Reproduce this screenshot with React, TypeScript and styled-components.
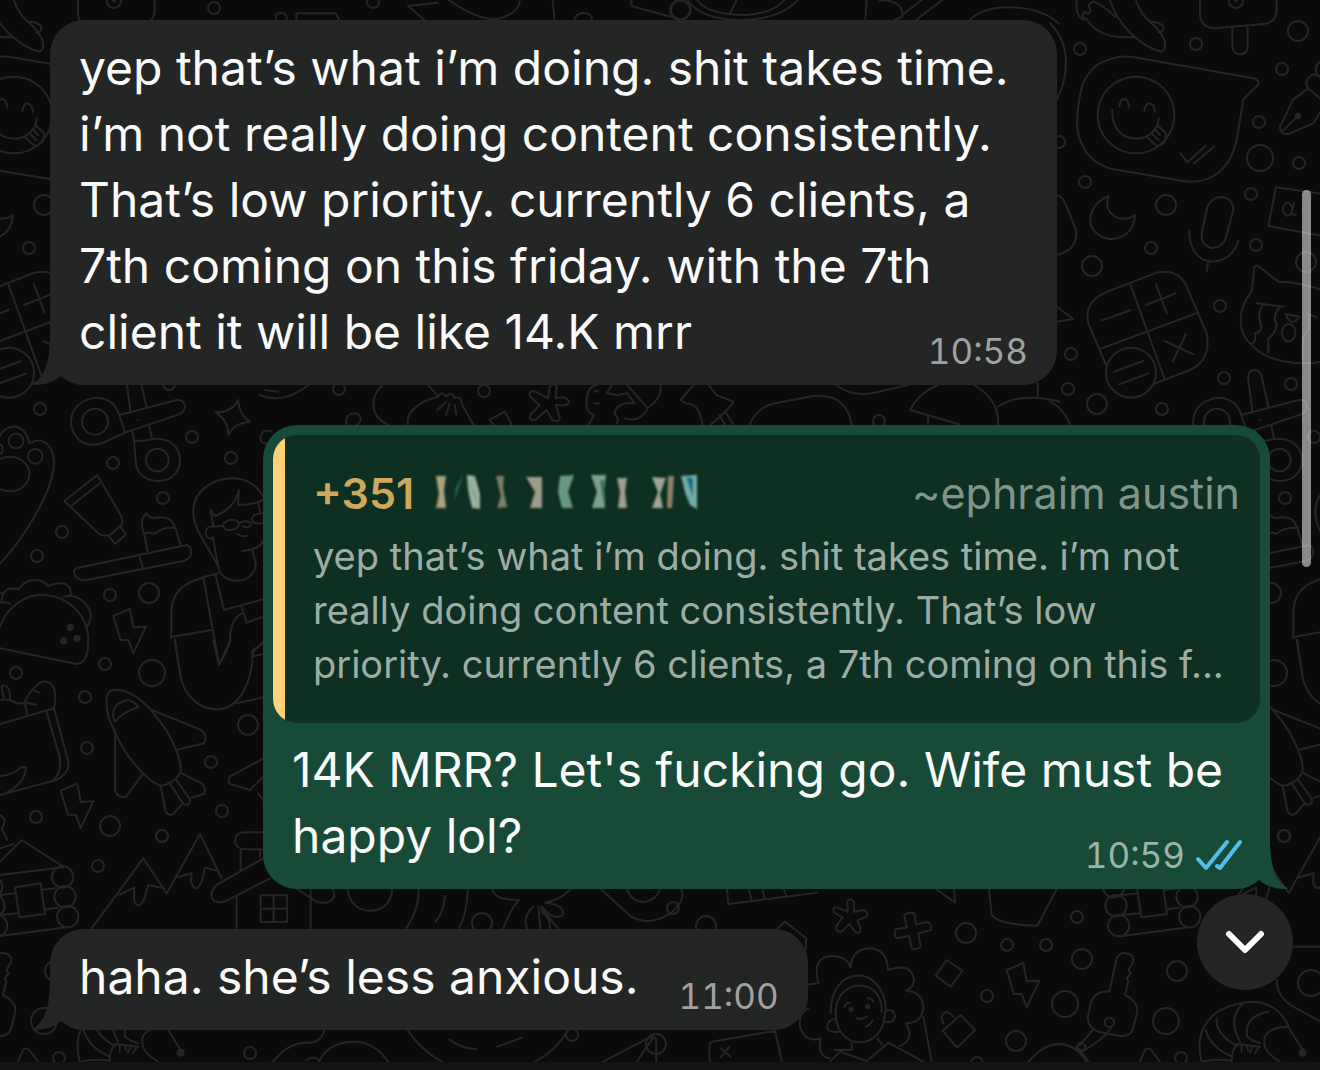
import React from "react";
import styled, { createGlobalStyle } from "styled-components";

const GlobalStyle = createGlobalStyle`
  *, *::before, *::after { box-sizing: border-box; }
  body {
    margin: 0;
    background: #0a0a0a;
    color: #fafafa;
    font-family: Inter, "Noto Sans", sans-serif;
  }
`;

const Screen = styled.div`
  position: relative;
  display: flex;
  flex-direction: column;
  min-height: 100vh;
  overflow: hidden;
  background: #0a0a0a;
`;

const WallpaperSvg = styled.svg`
  position: absolute;
  inset: 0;
  width: 100%;
  height: 100%;
  color: #252525;

  path, circle, ellipse, rect { vector-effect: non-scaling-stroke; }
`;

const Thread = styled.main`
  position: relative;
  flex: 1;
  display: flex;
  flex-direction: column;
  gap: 40px;
  padding: 20px 50px 32px;
`;

const Bubble = styled.article<{ $outgoing?: boolean }>`
  position: relative;
  align-self: ${(p) => (p.$outgoing ? "flex-end" : "flex-start")};
  max-width: 1007px;
  padding: ${(p) => (p.$outgoing ? "10px 10px 20px" : "15px 29px 20px")};
  border-radius: 34px;
  background: ${(p) => (p.$outgoing ? "#184b37" : "#242625")};
`;

const TailSvg = styled.svg<{ $outgoing?: boolean }>`
  position: absolute;
  bottom: 0;
  ${(p) => (p.$outgoing ? "right: -18px; transform: scaleX(-1);" : "left: -18px;")}
  color: ${(p) => (p.$outgoing ? "#184b37" : "#242625")};
`;

const Body = styled.p<{ $inset?: boolean }>`
  position: relative;
  margin: 0;
  padding: ${(p) => (p.$inset ? "14px 18px 0 19px" : "0")};
  font-size: 48px;
  line-height: 66px;
`;

const Meta = styled.span<{ $outgoing?: boolean }>`
  float: right;
  display: flex;
  align-items: center;
  gap: 10px;
  margin: 28px 0 -10px 40px;
  font-size: 35px;
  line-height: 48px;
  font-variant-numeric: tabular-nums;
  color: ${(p) => (p.$outgoing ? "#9bb3a9" : "#a0a1a0")};
`;

const Quote = styled.blockquote`
  margin: 0;
  padding: 30px 20px 32px 28px;
  border-radius: 24px;
  overflow: hidden;
  background: #0d3023;
  display: flow-root;
  position: relative;
  padding-left: 40px;

  &::before {
    content: "";
    position: absolute;
    inset: 0 auto 0 0;
    width: 12px;
    background: #ffd279;
  }
`;

const QuoteHeader = styled.header`
  display: flex;
  align-items: center;
  gap: 20px;
  font-size: 43px;
  line-height: 56px;
  padding-bottom: 8px;
`;

const Phone = styled.span`
  font-weight: 600;
  color: #cfa85c;
`;

const Author = styled.cite`
  margin-left: auto;
  font-style: normal;
  color: #7f948b;
`;

const QuoteText = styled.p`
  margin: 0;
  font-size: 38px;
  line-height: 54px;
  color: #9dada6;
`;

const ScrollThumb = styled.div`
  position: absolute;
  top: 190px;
  right: 9px;
  width: 9px;
  height: 377px;
  border-radius: 5px;
  background: rgba(255, 255, 255, 0.52);
`;

const JumpButton = styled.button`
  position: absolute;
  right: 27px;
  bottom: 80px;
  display: grid;
  place-items: center;
  width: 96px;
  height: 96px;
  padding: 0;
  border: 0;
  border-radius: 50%;
  background: #242625;
  color: #fff;
  cursor: pointer;
`;

const BottomBar = styled.footer`
  position: relative;
  height: 8px;
  background: #121413;
`;

const TILE = 1122;

const smallDots: [number, number][] = [
  [40, 409], [113, 463], [192, 437], [231, 458], [163, 498], [62, 532], [37, 556], [110, 595],
  [16, 673], [105, 664], [85, 697], [87, 748], [211, 762], [36, 817], [222, 811], [162, 836],
  [98, 866], [59, 1058], [250, 1053], [1080, 49], [1196, 44], [1282, 69], [1259, 122],
  [1299, 163], [1059, 142], [1085, 182], [1251, 194], [1151, 248], [1256, 245], [1220, 306],
  [1071, 354], [1068, 389], [1224, 378], [1291, 384], [1284, 836], [1077, 917], [1007, 945],
  [1046, 945], [987, 996], [977, 1063], [673, 908], [572, 1035], [214, 8], [373, 2],
  [339, 389], [484, 391], [879, 421],
];
const mediumDots: [number, number][] = [
  [149, 593], [248, 725], [110, 826], [1298, 31], [1166, 205], [1092, 266], [1306, 262],
  [1097, 404], [966, 933], [1082, 959], [1177, 971], [1016, 1041], [482, 923], [706, 926],
  [656, 1044], [680, 10],
];
const largeDots: [number, number][] = [
  [152, 673], [1260, 158], [1065, 1004], [1166, 1021], [1311, 983],
];

const Bolt = ({ at }: { at: string }) => (
  <path transform={at} d="M340 708 L390 687 L400 742 L438 740 L400 820 L385 780 L362 780Z" />
);

const Doodles = () => (
  <g id="doodles" fill="none" stroke="currentColor" strokeWidth={2} strokeLinecap="round" strokeLinejoin="round">
    {smallDots.map(([x, y]) => <circle key={`${x}-${y}`} cx={x} cy={y} r={6} />)}
    {mediumDots.map(([x, y]) => <circle key={`${x}-${y}`} cx={x} cy={y} r={10} />)}
    {largeDots.map(([x, y]) => <circle key={`${x}-${y}`} cx={x} cy={y} r={13} />)}

    {/* paw, tape rolls, star, toothpaste, brush, reader, taco */}
    <g transform="translate(0 380) scale(.3333)">
      <circle cx={48} cy={183} r={22} /><circle cx={106} cy={229} r={22} /><ellipse cx={30} cy={282} rx={58} ry={52} />
      <path d="M-14 190 Q8 190 8 208 Q8 225 -14 225 M0 168 C15 130 75 125 88 190 C130 165 170 200 160 270 C150 350 60 490 0 550" />
      <circle cx={285} cy={125} r={39} />
      <path d="M358 105 C345 60 300 45 265 58 C215 75 200 125 225 165 C245 197 280 200 310 188 L375 158Z" />
      <path d="M358 105 L530 60 Q553 57 555 80 Q553 98 535 104 L375 158 M398 155 L402 184 M448 137 L456 175 M413 119 l1 1" />
      <circle cx={472} cy={240} r={34} />
      <path d="M402 184 L440 181 C500 165 540 195 540 240 C540 280 510 303 475 303 C440 303 410 285 407 245Z" />
      <path d="M714 60 Q720 110 750 125 Q700 130 685 165 Q685 120 647 97 Q695 98 714 60Z" />
      <path d="M815 155 Q790 145 784 165 Q775 190 800 190" />
      <path d="M292 285 L193 363 L295 460 Q310 470 330 465 L365 435 Q370 425 362 405Z M213 378 L300 310 M328 470 L345 492 L378 463 L362 442" />
      <path d="M235 563 L560 495 Q575 500 573 520 Q570 538 550 543 L255 601 Q225 600 222 575 Q222 567 235 563Z M418 528 L428 562" />
      <path d="M443 515 L433 462 Q415 420 440 400 Q450 420 480 412 Q515 410 525 442 L541 493 M433 462 Q450 455 462 462 Q490 440 527 444" />
      <path d="M655 560 C620 490 580 450 580 395 C580 330 640 295 700 295 C750 295 780 330 790 350 M632 390 L645 408 Q700 390 717 330 L714 375 Q760 375 790 360 M775 370 L780 395" />
      <ellipse cx={693} cy={435} rx={24} ry={15} transform="rotate(-10 693 435)" />
      <ellipse cx={780} cy={415} rx={24} ry={15} transform="rotate(-10 780 415)" />
      <path d="M718 430 Q738 418 754 430 M728 438 Q740 448 752 436 M668 437 L640 440 C610 435 610 480 638 476 M632 390 L640 438 M638 470 L655 560 C665 620 760 615 768 555 L758 512 M725 513 Q785 510 795 470 M712 462 Q725 472 742 467" />
      <path d="M514 775 L514 700 C514 620 570 600 655 580 M610 592 L655 840 M646 582 L672 690 L790 658 M520 770 L635 750 M725 680 L740 728 L790 710 M525 780 L533 840 M725 700 Q690 720 690 780 Q680 820 665 840 M755 820 L790 785" />
      <path d="M0 740 C20 680 80 640 135 645 C210 650 265 710 265 780 M10 640 Q25 620 55 628 Q75 600 105 600 Q130 600 145 618 Q170 605 195 612 Q215 622 212 645 M190 650 C240 640 275 680 272 715 L262 740 M-6 640 L10 640 L4 665 M0 668 Q20 665 30 672" />
      <g fill="currentColor"><circle cx={211} cy={742} r={8} /><circle cx={191} cy={783} r={8} /><circle cx={231} cy={775} r={8} /></g>
      <Bolt at="" />
    </g>

    {/* grocery bag, shuttle, mountains, house, cabin */}
    <g transform="translate(0 640) scale(.3333)">
      <path d="M265 0 Q265 70 230 72 L0 25" />
      <path d="M0 252 L162 205 L205 365 Q207 395 185 410 Q170 422 150 425 L0 465 M140 217 L180 355 Q185 400 160 420 M0 408 Q40 405 62 382 L78 382 Q75 430 20 458" />
      <path d="M72 190 C90 150 120 120 140 125 C170 130 168 180 162 205 M72 190 Q80 200 80 225 M0 180 Q30 175 50 190 L70 190 M97 150 L118 158 M78 188 L108 194 M5 138 Q30 130 30 175 M5 140 L12 178" />
      <path d="M340 265 C315 220 315 165 330 152 C380 140 430 180 465 225 C520 290 550 370 540 400 Q520 435 480 437 C430 415 370 340 340 265Z M345 245 C330 215 345 185 385 180 Q405 185 415 202 Q370 215 345 245Z" />
      <path d="M345 270 L345 450 Q350 475 378 470 L430 400 M455 210 L600 268 Q625 285 612 310 L528 330 M482 438 L497 515 Q508 530 520 522 L548 490 M545 400 L605 430 Q620 445 612 462 L575 473 M508 428 L550 492 Q570 500 570 478 L528 418" />
      <Bolt at="translate(-158 -256)" />
      <path d="M275 865 L430 655 L500 760 L600 582 L665 715 M358 765 L403 742 L402 780 Q410 810 430 785 L445 735 L493 745 M533 712 L575 700 L573 725 Q585 765 605 725 L615 683 L655 693" />
      <path d="M790 577 L730 577 Q705 580 705 605 Q710 628 735 628 L790 628 M722 630 L722 690 M780 630 L780 650 M790 655 L650 735 Q625 760 640 780 Q660 795 690 777 L810 715 M710 768 L710 865" />
      <path d="M790 355 L690 410 Q682 425 690 432 L750 450 L790 410 M775 460 L790 480" />
      <path d="M525 0 L540 100 C550 170 600 208 650 208 C720 208 760 120 758 30 L790 10 M640 0 L657 75 L692 0 M710 190 L790 172 M762 48 L790 42" />
      <path d="M0 665 L65 600 L190 680 M0 705 L190 682 M45 742 L122 730 L135 822 L58 832Z M0 765 L48 760 M125 750 L165 745 M0 825 L55 820 M135 808 L172 803 M0 888 L200 862 M0 625 L40 612 M0 525 Q25 540 5 565 L22 600" />
      <circle cx={188} cy={711} r={32} /><circle cx={195} cy={770} r={32} /><circle cx={203} cy={830} r={32} />
      <circle cx={-25} cy={740} r={32} /><circle cx={-18} cy={797} r={32} /><circle cx={-10} cy={857} r={32} />
    </g>

    {/* banana, popsicle, chat bubble, fountain pen */}
    <g transform="translate(1050 0) scale(.3333)">
      <path d="M80 0 Q75 45 100 60 L108 55 Q140 105 200 110 L250 112 M100 60 Q95 40 105 35 Q115 50 122 30 L115 15 L130 5 Q160 15 195 50" />
      <path d="M180 0 C200 70 270 140 335 155 Q350 150 343 120 Q330 90 300 65 Q270 40 258 0 M300 65 Q330 65 340 80 Q340 100 325 97" />
      <path d="M450 0 L450 45 Q455 85 495 85 L640 72 Q680 68 680 30 L680 0 M547 85 V140 Q550 163 570 163 Q592 162 593 140 V78" />
      <circle cx={558} cy={3} r={21} /><circle cx={558} cy={0} r={4} />
      <path d="M245 170 L610 235 Q630 240 624 255 L580 298 L560 420 C540 510 480 555 400 543 L190 508 C110 490 75 420 82 345 C90 260 100 230 140 195 Q190 165 245 170Z" />
      <circle cx={258} cy={345} r={115} />
      <path d="M208 320 C212 288 235 290 238 323 M283 333 C287 303 310 303 315 335 M187 330 C180 440 320 440 326 355 M292 412 L320 438 Q350 435 348 400 L325 378 M305 400 L325 420 M315 388 L330 405 M392 460 L412 487 L467 437 M432 490 L492 440" />
      <path d="M775 265 L730 298 L690 380 Q690 405 715 402 L790 370 L815 330 M815 300 L775 265 Q760 245 785 225 Q800 220 815 235 M698 393 L742 350 M815 180 Q790 200 800 220" />
      <circle cx={744} cy={348} r={7} fill="currentColor" />
      <path d="M0 70 C60 130 60 220 20 300" />
    </g>

    {/* moon, microphone, letter card, calculator, cat */}
    <g transform="translate(1050 200) scale(.3333)">
      <path d="M175 -12 C120 10 105 70 140 100 C180 135 250 115 255 45 Q235 60 205 55 Q160 35 175 -12Z M20 -15 Q40 -10 50 20 L78 90 Q85 150 20 165" />
      <path d="M470 30 L455 100 C450 155 520 160 530 105 L550 30 C550 -22 480 -22 470 30Z M418 92 C415 210 540 210 565 122 M475 182 L470 215" />
      <path d="M840 -15 L678 -38 L655 78 L820 108 M732 10 L725 38 Q730 50 738 42" /><ellipse cx={713} cy={28} rx={14} ry={19} />
      <path d="M310 552 L420 510 Q485 480 470 400 L410 260 Q385 205 320 218 L165 278 Q100 310 115 370 L168 495 M240 250 L345 540 M150 447 L438 340 M155 362 L242 330 M318 253 L350 340 M288 315 L377 280 M345 423 L430 463 M408 402 L368 485 M193 515 L280 483 M207 553 L295 520" />
      <circle cx={243} cy={518} r={75} />
      <path d="M840 280 Q760 245 685 245 L630 202 Q620 193 613 200 L605 275 C560 330 560 400 610 440 C660 490 760 500 840 480" />
      <path d="M620 310 L700 320 M640 315 Q620 340 632 370 Q640 395 615 400 Q620 420 608 430 M690 320 Q665 350 680 370 Q680 400 655 415 L655 460 M708 342 L748 350 Q735 370 722 365 Q710 355 708 342 M770 340 L800 352 M780 345 L775 390 L758 415 L758 480" />
      <ellipse cx={716} cy={398} rx={20} ry={26} />
      <path d="M20 320 L70 357 L20 365 M0 605 Q35 620 60 672 M608 638 L595 540 Q592 512 612 510 Q630 510 635 530 L655 620" />
    </g>

    {/* walnuts, blossom, brush and mushroom between the first two messages */}
    <g transform="translate(260 370) scale(.51 .3333)">
      <path d="M0 75 Q45 105 95 45 M10 60 L35 65 M240 45 C215 80 215 140 250 163 M290 163 C285 120 320 90 350 80 L330 45 M350 80 Q355 60 365 80 Q375 60 382 85 Q395 75 395 100 L418 163 M365 95 L348 120 M372 100 L365 135 M382 105 L385 135" />
      <path d="M565 85 L568 50 Q575 35 582 50 L580 85 Q600 75 606 95 Q605 110 580 105 L588 145 Q585 160 573 150 L562 120 L540 150 Q525 150 530 135 L548 105 L530 80 Q525 60 540 65Z" />
      <path d="M660 45 Q640 50 640 100 Q640 130 655 135 L645 163 M655 65 l8 -3 M655 100 l10 0 M690 45 L680 70 L700 75 L720 70 L735 100 Q700 95 695 130 Q705 150 700 160 M720 45 L760 115 Q745 160 715 145 M785 45 Q790 80 760 115" />
      <path d="M850 45 L825 90 L835 100 Q855 100 862 130 L868 163 M880 45 L895 75 L928 95 Q925 110 885 163 M900 135 L912 163 M912 125 L928 163 M960 163 Q975 110 1010 100 L1085 78 Q1150 70 1160 163 M1130 45 Q1160 80 1200 70 L1270 45" />
      <path d="M1330 45 Q1290 70 1275 120 L1370 163 M1400 45 Q1450 90 1447 163 M1447 110 Q1490 65 1568 95 M1310 140 V163 M1525 40 V80 M458 163 L450 150 L480 125 L493 163 M170 163 Q165 130 190 130 Q205 150 190 163" />
    </g>

    {/* window, palm, ruler and guitar around the last message */}
    <g transform="translate(260 880) scale(.357 .3333)">
      <path d="M2 46 H76 V126 H2Z M38 46 V126 M2 86 H76 M142 30 V145 M105 28 L160 66 Q195 75 208 50 L205 28 M245 28 Q255 92 310 92 Q365 90 370 28 M445 28 Q445 90 410 145 M518 48 Q515 95 492 125 M582 28 Q580 100 558 145" />
      <path d="M652 28 Q655 60 725 60 Q700 90 682 145 M765 80 Q735 110 748 145 M780 80 L785 145 M788 95 Q815 115 812 145 M788 85 L835 145 M790 80 Q820 125 848 105 Q855 75 800 68 Q840 60 870 28" />
      <path d="M955 28 L1040 110 Q1090 140 1150 100 Q1195 60 1180 28 M1028 28 Q1040 65 1075 66 Q1110 60 1120 28 M1308 28 L1312 72 L1560 38 M1370 30 L1378 62 M1408 28 L1414 58 M1468 28 L1474 48 M1448 148 L1470 125 L1530 175 L1528 210" />
      <path d="M180 452 Q170 490 130 488 Q80 490 50 530 L35 546 M165 546 Q190 485 265 485 Q320 485 360 546 M130 540 Q150 525 165 540 M415 452 Q450 510 510 546 M862 452 Q830 510 770 546 M530 478 Q560 505 605 508 M665 500 L735 472 M960 546 L1095 470 Q1112 470 1110 490 V546 M1100 475 L1055 546 M1445 452 L1265 485 Q1255 490 1260 546 M1443 452 L1462 546 M1290 505 L1318 530 M1315 500 L1290 532" />
    </g>

    {/* blossom, plus, tags and portrait */}
    <g transform="translate(800 880) scale(.3333)">
      <path d="M143 95 L142 65 Q150 50 162 65 L162 95 L190 90 Q208 95 200 110 L172 122 L182 145 Q180 165 165 155 L148 132 L125 155 Q105 155 108 140 L128 112 L102 98 Q95 80 110 82Z" />
      <path d="M318 130 L313 105 Q325 95 343 100 L348 133 L385 126 Q395 135 393 150 L355 160 L362 200 Q350 212 335 205 L328 168 L290 175 Q280 165 287 148 L322 142Z" />
      <path d="M410 28 L465 68 L462 28 M567 28 L575 105 Q600 135 712 137 L770 28 M440 240 L487 272 L452 320 L407 287Z M482 405 L525 450 L475 500 Q465 500 460 490 L428 452Z M430 430 C415 400 440 385 460 410 M685 546 Q740 480 800 495 Q840 510 860 546" />
      <Bolt at="translate(280 -438)" />
      <path d="M15 315 L55 310 Q35 230 95 228 Q140 228 152 262 Q155 205 215 205 Q265 215 263 270 Q335 245 342 300 Q340 325 318 332 Q370 335 370 385 Q365 430 318 430 Q345 480 300 498 M25 385 Q-5 400 0 440 Q15 490 62 475 Q50 530 90 535" />
      <path d="M92 400 C90 250 255 250 258 395 M107 395 C110 290 250 290 245 395 M107 395 C105 520 255 515 255 395 M103 418 Q80 420 82 445 Q90 460 115 455 M262 390 Q285 390 285 410 Q280 430 258 425 M133 380 Q140 368 150 368 M203 355 Q215 355 220 365 M170 415 Q185 420 200 410 M198 440 Q212 435 217 422 M155 490 L155 510 L105 510 M90 545 L120 515 L200 543 L265 488 L370 545 M232 475 L245 492 M370 410 L395 545" />
      <g fill="currentColor"><circle cx={153} cy={388} r={5} /><circle cx={203} cy={379} r={5} /></g>
    </g>

    {/* key, tent and shrimp */}
    <g transform="translate(1060 820) scale(.3333)">
      <path d="M148 515 L170 415 Q180 395 200 400 Q225 405 218 430 L205 450 L212 460 L200 475 L205 485 L195 525 Q235 545 232 575 L218 630 Q210 650 180 648 L115 635 Q80 620 84 590 L92 550 Q105 510 148 515Z" />
      <circle cx={148} cy={607} r={14} />
      <path d="M100 628 L60 675 M155 620 Q140 650 75 690 M50 680 l12 -14 l16 12 l-12 16z M0 672 Q60 680 85 725 M65 695 L80 725 M240 725 L255 690 Q265 680 275 692 L300 725" />
      <path d="M515 722 Q470 715 425 725 C400 630 450 560 560 547 C620 540 670 570 690 630 L735 700 M515 722 Q515 690 530 675 M437 630 Q450 680 515 710 M470 595 Q465 640 530 678 M552 548 Q500 590 540 665 M625 575 Q550 590 562 650 Q570 660 600 670 M680 620 Q600 625 615 680 Q620 700 660 725 M530 672 L600 680 M545 672 L545 695 M560 675 L565 692 M578 680 L570 698 M598 680 L585 698" />
      <circle cx={728} cy={698} r={9} fill="currentColor" />
      <path d="M700 380 H790 M650 480 Q650 530 700 560 L790 610" />
    </g>

    {/* row cut off by the top edge */}
    <g transform="translate(50 0) scale(.657 .3333)">
      <path d="M345 60 Q340 38 352 38 Q362 40 360 60 M375 60 V40 H435 L440 60 M590 8 L545 18 L570 60 M607 0 Q650 60 680 58 Q715 40 715 0 M765 0 L768 60 M798 60 Q800 40 812 38 Q825 40 825 60 M885 0 V18 L945 50 M985 0 Q1000 45 1060 45 Q1100 40 1118 0 M970 0 Q990 58 1050 60 Q1110 60 1138 0 M1045 0 L1035 40 M1243 0 L1241 60 M1262 0 Q1300 0 1297 50 L1285 60 M1327 0 L1297 45 M1358 0 L1318 60 M1400 60 Q1420 20 1465 22 Q1510 25 1535 70" />
      <ellipse cx={960} cy={30} rx={15} ry={28} />
    </g>
  </g>
);

const Wallpaper = () => (
  <WallpaperSvg aria-hidden="true">
    <Doodles />
    <use href="#doodles" x={-TILE} />
    <use href="#doodles" x={TILE} />
  </WallpaperSvg>
);

const Tail = ({ outgoing }: { outgoing?: boolean }) => (
  <TailSvg $outgoing={outgoing} width={46} height={52} viewBox="0 0 46 52" aria-hidden="true">
    <path d="M18 0 C18 28 14 42 0 52 C14 52 22 49 29 43 L46 30 L46 0Z" fill="currentColor" />
  </TailSvg>
);

const ReadTicks = () => (
  <svg width={47} height={32} viewBox="0 0 47 32" fill="none" stroke="#53bdeb" strokeWidth={4} strokeLinecap="round" strokeLinejoin="round" role="img" aria-label="Read">
    <path d="M3 20 L11 29 L32 3 M22 27 L25 29 L45 3" />
  </svg>
);

const smudges = [
  { d: "M2 4 L12 4 L10 18 L12 36 L2 36 L5 22Z", c: "#a8a27c" },
  { d: "M30 0 L22 16 L20 30 L25 14Z", c: "#27736f" },
  { d: "M33 3 L41 4 L46 22 L46 37 L38 36 L34 18Z", c: "#9ab09d" },
  { d: "M36 8 L40 22 L44 32", c: "#286b5b" },
  { d: "M62 4 L70 4 L69 16 L73 35 L63 36 L67 24Z", c: "#7d8065" },
  { d: "M92 5 L108 5 L108 36 L96 36 L101 20Z", c: "#9c9a88" },
  { d: "M126 4 L140 3 L134 20 L139 36 L128 36 L124 20Z", c: "#669984" },
  { d: "M157 3 L172 3 L170 18 L171 36 L158 36 L163 20Z", c: "#7fa18c" },
  { d: "M166 8 L170 8 L169 32Z", c: "#1b7168" },
  { d: "M183 6 L193 6 L191 20 L193 36 L184 36 L186 20Z", c: "#a39b8d" },
  { d: "M218 5 L232 6 L226 22 L229 36 L218 36 L224 20Z", c: "#a1a493" },
  { d: "M234 4 L240 4 L238 36 L233 36Z", c: "#8e8264" },
  { d: "M247 4 L263 3 L263 37 L256 33 L251 20Z", c: "#75aaa7" },
  { d: "M252 5 L259 6 L259 25Z", c: "#176b86" },
];

const HiddenNumber = () => (
  <svg width={268} height={42} viewBox="0 0 268 42" role="img" aria-label="Number hidden">
    <filter id="soft"><feGaussianBlur stdDeviation="1" /></filter>
    <g filter="url(#soft)">
      {smudges.map((s) => <path key={s.d} d={s.d} fill={s.c} />)}
    </g>
  </svg>
);

export default function App() {
  return (
    <Screen>
      <GlobalStyle />
      <Wallpaper />
      <Thread>
        <Bubble>
          <Tail />
          <Body>
            yep that’s what i’m doing. shit takes time. i’m not really doing content consistently.
            That’s low priority. currently 6 clients, a 7th coming on this friday. with the 7th
            client it will be like 14.K mrr
            <Meta><time>10:58</time></Meta>
          </Body>
        </Bubble>
        <Bubble $outgoing>
          <Tail outgoing />
          <Quote>
            <QuoteHeader>
              <Phone>+351</Phone>
              <HiddenNumber />
              <Author>~ephraim austin</Author>
            </QuoteHeader>
            <QuoteText>
              yep that’s what i’m doing. shit takes time. i’m not really doing content consistently.
              That’s low priority. currently 6 clients, a 7th coming on this f...
            </QuoteText>
          </Quote>
          <Body $inset>
            14K MRR? Let's fucking go. Wife must be happy lol?
            <Meta $outgoing><time>10:59</time><ReadTicks /></Meta>
          </Body>
        </Bubble>
        <Bubble>
          <Tail />
          <Body>
            haha. she’s less anxious.
            <Meta><time>11:00</time></Meta>
          </Body>
        </Bubble>
      </Thread>
      <BottomBar />
      <ScrollThumb />
      <JumpButton type="button" aria-label="Scroll to latest message">
        <svg width={40} height={26} viewBox="0 0 40 26" fill="none" stroke="currentColor" strokeWidth={6} strokeLinecap="round" strokeLinejoin="round" aria-hidden="true">
          <path d="M4 5 L20 21 L36 5" />
        </svg>
      </JumpButton>
    </Screen>
  );
}
